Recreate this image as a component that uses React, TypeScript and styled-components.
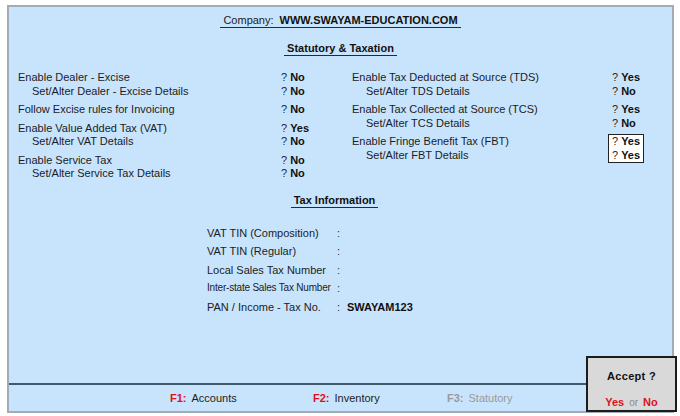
import React from "react";
import styled, { createGlobalStyle } from "styled-components";

const GlobalStyle = createGlobalStyle`
  html, body {
    margin: 0;
    padding: 0;
    background: #ffffff;
  }
  body {
    font-family: "Liberation Sans", Arial, sans-serif;
    font-size: 11px;
    color: #1c1c1c;
  }
`;

const Screen = styled.div`
  position: relative;
  width: 680px;
  height: 416px;
  padding: 5px 6px 3px 7px;
  box-sizing: border-box;
`;

const Panel = styled.div`
  height: 408px;
  box-sizing: border-box;
  display: flex;
  flex-direction: column;
  background: #c8e4fc;
  border: 2px solid #a3acb6;
  padding-top: 7px;
`;

const TitleRow = styled.div<{ mt?: number; shift?: number }>`
  text-align: center;
  margin-top: ${(p) => p.mt ?? 0}px;
  padding-right: ${(p) => p.shift ?? 0}px;
`;

const Title = styled.span`
  display: inline-block;
  line-height: 13px;
  padding: 0 3px;
  border-bottom: 1px solid #1f2d3a;
  font-weight: bold;
  color: #111;
`;

const Light = styled.span`
  font-weight: normal;
  margin-right: 6px;
  color: #1c1c1c;
`;

const Columns = styled.div`
  display: grid;
  grid-template-columns: 334px 1fr;
  margin-top: 15px;
  padding-left: 9px;
`;

const Column = styled.div`
  display: flex;
  flex-direction: column;
  gap: 5px;
`;

const Group = styled.div<{ labelWidth: number }>`
  display: grid;
  grid-template-columns: ${(p) => p.labelWidth}px auto;
  align-items: start;
`;

const Labels = styled.div`
  display: flex;
  flex-direction: column;
`;

const Label = styled.div<{ indent?: boolean }>`
  line-height: 13.5px;
  white-space: nowrap;
  padding-left: ${(p) => (p.indent ? 14 : 0)}px;
`;

const Answers = styled.div<{ boxed?: boolean }>`
  display: flex;
  flex-direction: column;
  justify-self: start;
  ${(p) =>
    p.boxed
      ? `
    border: 1px solid #222;
    background: #ffffff;
    margin: -1px 0 0 -4px;
    padding: 0 3px;
  `
      : ""}
`;

const Answer = styled.div`
  line-height: 13.5px;
  white-space: nowrap;
`;

const Mark = styled.span`
  margin-right: 3px;
  color: #2a2a2a;
`;

const Value = styled.b`
  color: #111;
`;

const TaxGrid = styled.div`
  display: grid;
  grid-template-columns: 130px 10px auto;
  margin: 16px 0 0 198px;
  line-height: 18.5px;
`;

const TaxLabel = styled.div<{ narrow?: boolean }>`
  white-space: nowrap;
  ${(p) => (p.narrow ? "font-size: 10px; letter-spacing: -0.2px;" : "")}
`;

const Colon = styled.div`
  color: #333;
`;

const Spacer = styled.div`
  flex: 1;
`;

const Footer = styled.div`
  height: 26px;
  border-top: 2px solid #3f5a6c;
  display: flex;
  align-items: center;
  padding-left: 161px;
`;

const FItem = styled.div<{ width?: number; disabled?: boolean }>`
  width: ${(p) => (p.width ? `${p.width}px` : "auto")};
  color: ${(p) => (p.disabled ? "#9a9a9a" : "#1c1c1c")};
  white-space: nowrap;
`;

const FKey = styled.b<{ disabled?: boolean }>`
  color: ${(p) => (p.disabled ? "#9a9a9a" : "#e0101a")};
  margin-right: 5px;
`;

const AcceptBox = styled.div`
  position: absolute;
  left: 586px;
  top: 356px;
  width: 91px;
  height: 56px;
  box-sizing: border-box;
  border: 2px solid #1c1c1c;
  background: #d9d9d9;
  display: flex;
  flex-direction: column;
  align-items: center;
  padding-top: 12px;
  gap: 13px;
`;

const AcceptTitle = styled.div`
  font-weight: bold;
  line-height: 13px;
  letter-spacing: 0.3px;
  color: #111;
`;

const AcceptChoice = styled.div`
  line-height: 13px;
  white-space: nowrap;
`;

const Red = styled.b`
  color: #e0101a;
`;

const Or = styled.span`
  color: #8a8a8a;
  font-size: 10px;
  margin: 0 5px;
`;

type Item = { label: string; value: string; indent?: boolean };
type GroupData = { items: Item[]; boxed?: boolean };

const leftGroups: GroupData[] = [
  {
    items: [
      { label: "Enable Dealer - Excise", value: "No" },
      { label: "Set/Alter Dealer - Excise Details", value: "No", indent: true },
    ],
  },
  { items: [{ label: "Follow Excise rules for Invoicing", value: "No" }] },
  {
    items: [
      { label: "Enable Value Added Tax (VAT)", value: "Yes" },
      { label: "Set/Alter VAT Details", value: "No", indent: true },
    ],
  },
  {
    items: [
      { label: "Enable Service Tax", value: "No" },
      { label: "Set/Alter Service Tax Details", value: "No", indent: true },
    ],
  },
];

const rightGroups: GroupData[] = [
  {
    items: [
      { label: "Enable Tax Deducted at Source (TDS)", value: "Yes" },
      { label: "Set/Alter TDS Details", value: "No", indent: true },
    ],
  },
  {
    items: [
      { label: "Enable Tax Collected at Source (TCS)", value: "Yes" },
      { label: "Set/Alter TCS Details", value: "No", indent: true },
    ],
  },
  {
    boxed: true,
    items: [
      { label: "Enable Fringe Benefit Tax (FBT)", value: "Yes" },
      { label: "Set/Alter FBT Details", value: "Yes", indent: true },
    ],
  },
];

const taxRows = [
  { label: "VAT TIN (Composition)", value: "" },
  { label: "VAT TIN (Regular)", value: "" },
  { label: "Local Sales Tax Number", value: "" },
  { label: "Inter-state Sales Tax Number", value: "", narrow: true },
  { label: "PAN / Income - Tax No.", value: "SWAYAM123" },
];

function OptionColumn({ groups, labelWidth }: { groups: GroupData[]; labelWidth: number }) {
  return (
    <Column>
      {groups.map((g, i) => (
        <Group key={i} labelWidth={labelWidth}>
          <Labels>
            {g.items.map((it) => (
              <Label key={it.label} indent={it.indent}>
                {it.label}
              </Label>
            ))}
          </Labels>
          <Answers boxed={g.boxed}>
            {g.items.map((it) => (
              <Answer key={it.label}>
                <Mark>?</Mark>
                <Value>{it.value}</Value>
              </Answer>
            ))}
          </Answers>
        </Group>
      ))}
    </Column>
  );
}

export default function App() {
  return (
    <Screen>
      <GlobalStyle />
      <Panel>
        <TitleRow>
          <Title>
            <Light>Company:</Light>WWW.SWAYAM-EDUCATION.COM
          </Title>
        </TitleRow>
        <TitleRow mt={14}>
          <Title>Statutory &amp; Taxation</Title>
        </TitleRow>

        <Columns>
          <OptionColumn groups={leftGroups} labelWidth={263} />
          <OptionColumn groups={rightGroups} labelWidth={260} />
        </Columns>

        <TitleRow mt={13} shift={12}>
          <Title>Tax Information</Title>
        </TitleRow>

        <TaxGrid>
          {taxRows.map((r) => (
            <React.Fragment key={r.label}>
              <TaxLabel narrow={r.narrow}>{r.label}</TaxLabel>
              <Colon>:</Colon>
              <Value>{r.value}</Value>
            </React.Fragment>
          ))}
        </TaxGrid>

        <Spacer />

        <Footer>
          <FItem width={143}>
            <FKey>F1:</FKey>Accounts
          </FItem>
          <FItem width={134}>
            <FKey>F2:</FKey>Inventory
          </FItem>
          <FItem disabled>
            <FKey disabled>F3:</FKey>Statutory
          </FItem>
        </Footer>
      </Panel>

      <AcceptBox>
        <AcceptTitle>Accept ?</AcceptTitle>
        <AcceptChoice>
          <Red>Yes</Red>
          <Or>or</Or>
          <Red>No</Red>
        </AcceptChoice>
      </AcceptBox>
    </Screen>
  );
}
